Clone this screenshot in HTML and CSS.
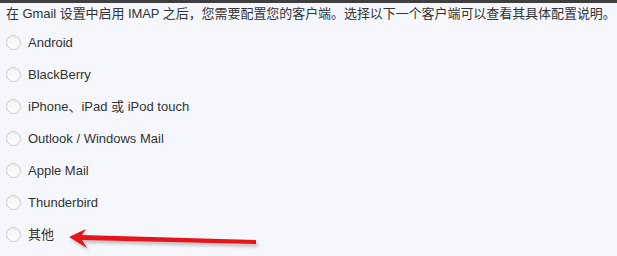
FILE: index.html
```html
<!DOCTYPE html>
<html lang="zh-CN">
<head>
<meta charset="utf-8">
<link rel="stylesheet" href="styles.css">
</head>
<body>
<div class="topbar"></div>
<div class="page">
  <p class="intro">在 Gmail 设置中启用 IMAP 之后，您需要配置您的客户端。选择以下一个客户端可以查看其具体配置说明。</p>
  <ul class="clients">
    <li class="client"><span class="radio"></span><span class="label">Android</span></li>
    <li class="client"><span class="radio"></span><span class="label">BlackBerry</span></li>
    <li class="client"><span class="radio"></span><span class="label">iPhone、iPad 或 iPod touch</span></li>
    <li class="client"><span class="radio"></span><span class="label">Outlook / Windows Mail</span></li>
    <li class="client"><span class="radio"></span><span class="label">Apple Mail</span></li>
    <li class="client"><span class="radio"></span><span class="label">Thunderbird</span></li>
    <li class="client"><span class="radio"></span><span class="label">其他</span></li>
  </ul>
  <svg class="arrow" width="210" height="40" viewBox="0 0 210 40" xmlns="http://www.w3.org/2000/svg">
    <defs>
      <filter id="sh" x="-10%" y="-50%" width="120%" height="200%">
        <feGaussianBlur stdDeviation="1.5"/>
      </filter>
    </defs>
    <g transform="translate(2,3)" fill="#8f8f8f" opacity="0.5" filter="url(#sh)">
      <polygon points="9,19 26,11 22,17 196,22 196,26 22,22 27,30"/>
    </g>
    <polygon points="9,19 26,11 22,17 196,22 196,26 22,22 27,30" fill="#e8141b"/>
  </svg>
</div>
</body>
</html>
```

FILE: styles.css
```css
html, body {
  margin: 0;
  padding: 0;
  background: #f6f7fc;
}
body {
  font-family: "Liberation Sans", Arial, "Noto Sans CJK SC", sans-serif;
  font-size: 13px;
  color: #333333;
  width: 617px;
  height: 256px;
  overflow: hidden;
}
.topbar {
  height: 3px;
  background: #3f3f3f;
}
.page {
  position: relative;
  padding-left: 6px;
}
.intro {
  margin: 3px 0 0 0;
  line-height: 16px;
  white-space: nowrap;
  letter-spacing: -0.06px;
}
.clients {
  list-style: none;
  margin: 4px 0 0 0;
  padding: 0;
}
.client {
  height: 32px;
  display: flex;
  align-items: center;
  gap: 7px;
}
.radio {
  width: 13px;
  height: 13px;
  border: 1px solid #cacacd;
  border-radius: 50%;
  background: linear-gradient(#f2f2f2, #ffffff);
  box-sizing: content-box;
  flex: none;
}
.label {
  line-height: 16px;
  padding-top: 1px;
}
.arrow {
  position: absolute;
  left: 60px;
  top: 212px;
}
```
